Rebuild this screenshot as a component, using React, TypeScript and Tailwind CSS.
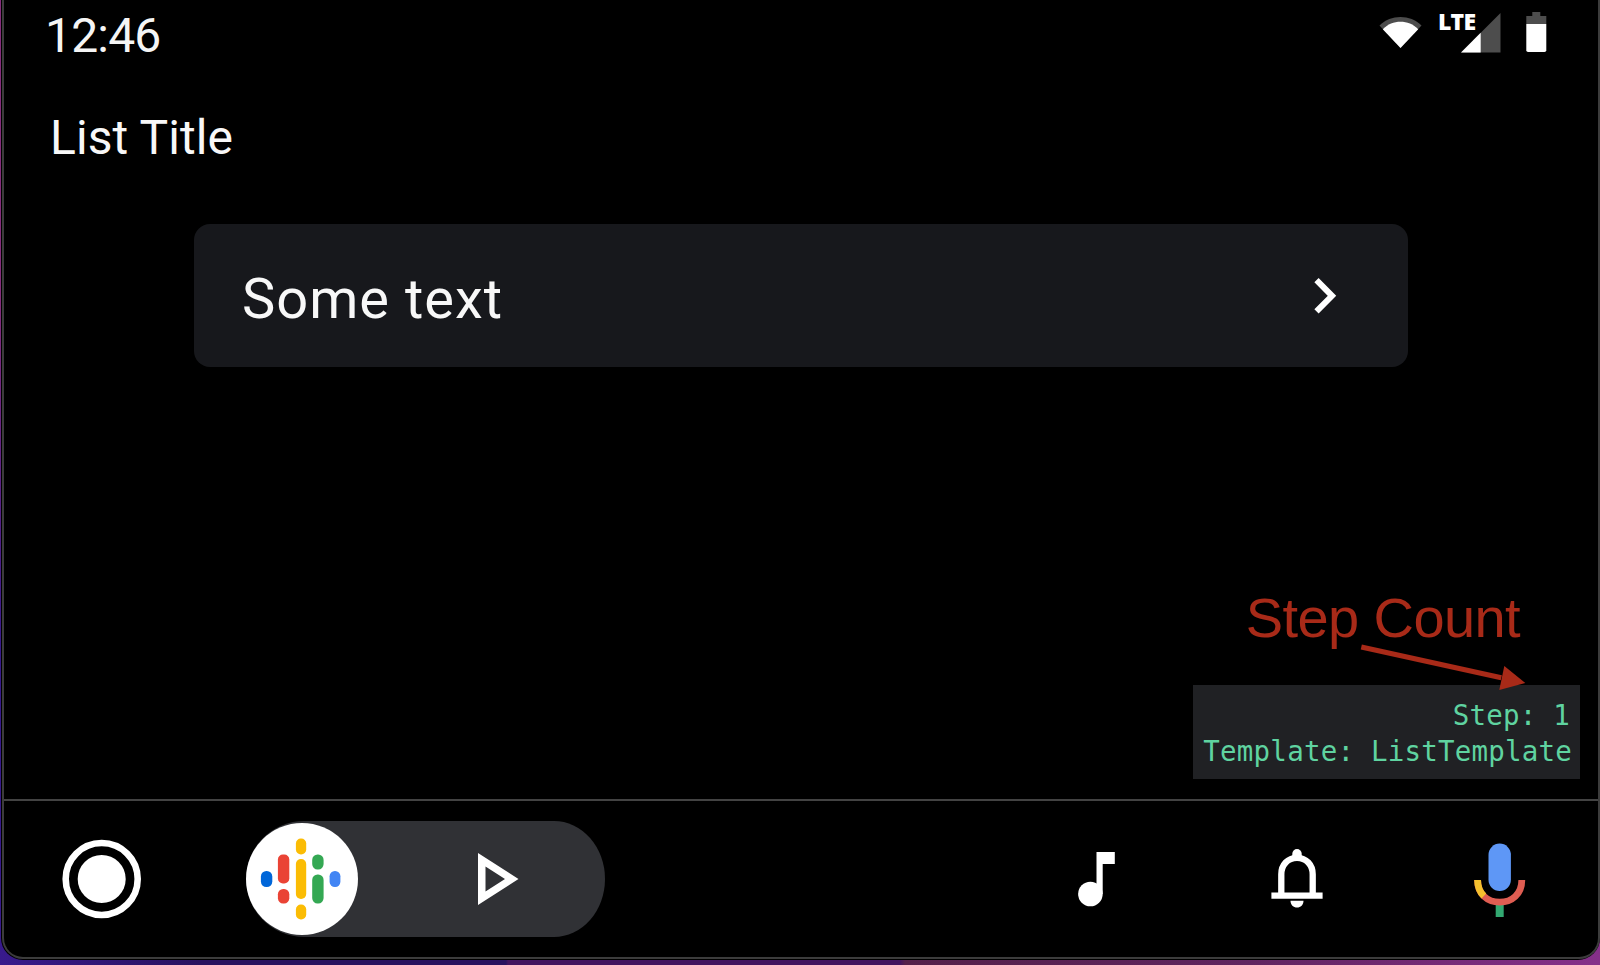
import React from 'react';

interface IconProps {
  className?: string;
}

const WifiIcon: React.FC<IconProps> = ({ className = '' }) => (
  <svg className={className} width="44" height="33" viewBox="0 0 44 33" fill="none">
    <path d="M0.5 9.5C12 -1.7 31 -1.7 42.5 9.5L21.5 32Z" fill="#4d4d4d" />
    <path d="M3.8 13.2C13.5 3.4 29.5 3.4 39.2 13.2L21.5 32Z" fill="#fff" />
  </svg>
);

const SignalIcon: React.FC<IconProps> = ({ className = '' }) => (
  <svg className={className} width="40" height="40" viewBox="0 0 40 40" fill="none">
    <path d="M0 39.5L39.5 0V39.5Z" fill="#4d4d4d" />
    <path d="M0 39.5L19.7 19.8V39.5Z" fill="#fff" />
  </svg>
);

const BatteryIcon: React.FC<IconProps> = ({ className = '' }) => (
  <svg className={className} width="21" height="40" viewBox="0 0 21 40" fill="none">
    <path d="M6.3 0H14.3V4H20.3V12H0.3V4H6.3Z" fill="#4d4d4d" />
    <path d="M0.3 12H20.3V38.2Q20.3 40 18.5 40H2.1Q0.3 40 0.3 38.2Z" fill="#fff" />
  </svg>
);

const ChevronIcon: React.FC = () => (
  <svg width="24" height="38" viewBox="0 0 24 38" fill="none">
    <path d="M2.5 3.2L18 18.8L2.5 34.4" stroke="#fff" strokeWidth="6" />
  </svg>
);

const HomeIcon: React.FC = () => (
  <svg width="80" height="80" viewBox="0 0 80 80" fill="none">
    <circle cx="39.7" cy="40" r="36" stroke="#fff" strokeWidth="6.6" />
    <circle cx="39.7" cy="40" r="24" fill="#fff" />
  </svg>
);

const PodcastBars: React.FC = () => (
  <svg width="112" height="112" viewBox="0.6 0 112 112">
    <rect x="15.5" y="48" width="11.4" height="16" rx="5.5" fill="#0066d9" />
    <rect x="32.5" y="31.5" width="11.4" height="29" rx="5" fill="#ea4335" />
    <rect x="32.5" y="66" width="11.4" height="14.5" rx="5.2" fill="#ea4335" />
    <rect x="50.5" y="15.5" width="10.3" height="16" rx="5" fill="#fbbc04" />
    <rect x="50.5" y="36" width="10.3" height="40" rx="5" fill="#fbbc04" />
    <rect x="50.5" y="81.5" width="10.3" height="15" rx="5" fill="#fbbc04" />
    <rect x="66.8" y="31.5" width="11.4" height="15" rx="5.4" fill="#34a853" />
    <rect x="66.8" y="51.5" width="11.4" height="29" rx="5.4" fill="#34a853" />
    <rect x="84.2" y="48" width="10.8" height="16" rx="5.2" fill="#4285f4" />
  </svg>
);

const PlayIcon: React.FC = () => (
  <svg width="42" height="54" viewBox="0.5 0 42 54">
    <path d="M0.5 1V53L41 27ZM8 14.5L27.5 27L8 39.5Z" fill="#fff" fillRule="evenodd" />
  </svg>
);

const NoteIcon: React.FC = () => (
  <svg width="37" height="56" viewBox="0 0 37 56" fill="#fff">
    <circle cx="12.4" cy="43" r="12.3" />
    <path d="M18.5 1H36.8V13H24.7V43H18.5Z" />
  </svg>
);

const BellIcon: React.FC = () => (
  <svg width="52" height="60" viewBox="0 1.2 52 60" fill="none">
    <path d="M10.3 46V26.5C10.3 17 16.8 10 26 10S41.7 17 41.7 26.5V46" stroke="#fff" strokeWidth="6.3" />
    <rect x="21.3" y="1.2" width="9.4" height="11" rx="4.7" fill="#fff" />
    <path d="M0.4 44.7H51.6V51H0.4Z" fill="#fff" />
    <path d="M19.5 53H32.5C32.5 57 29.6 59.8 26 59.8S19.5 57 19.5 53Z" fill="#fff" />
  </svg>
);

const MicIcon: React.FC = () => (
  <svg width="52" height="76" viewBox="0 0 52 76" fill="none">
    <rect x="14.5" y="2.6" width="22.4" height="47.4" rx="11.2" fill="#5e97f6" />
    <path d="M25.7 61V76" stroke="#32a871" strokeWidth="8" />
    <path d="M3.6 39C3.6 53 13.4 61.2 25.7 61.2S47.8 53 47.8 39" stroke="#df5d52" strokeWidth="6.8" />
    <path d="M3.6 39C3.6 45.8 6 51.2 9.9 55" stroke="#f4c02e" strokeWidth="6.8" />
  </svg>
);

const StatusBar: React.FC = () => (
  <header className="flex h-[76px] justify-between pl-[41px] pr-[51px]">
    <span className="mt-[8px] text-[48px] leading-[56px] tracking-[-0.8px] text-[#f5f5f5]">12:46</span>
    <div className="flex items-start">
      <WifiIcon className="mt-[16px]" />
      <span className="ml-[15px] mt-[7px] w-[23px] whitespace-nowrap font-['Open_Sans',sans-serif] text-[23px] font-extrabold leading-[28px] tracking-[-0.8px]">
        LTE
      </span>
      <SignalIcon className="mt-[12.5px]" />
      <BatteryIcon className="ml-[25px] mt-[12px]" />
    </div>
  </header>
);

const ListRow: React.FC<{ title: string }> = ({ title }) => (
  <div className="ml-[190px] mr-[190px] flex h-[143px] items-center justify-between rounded-[16px] bg-[#17181c] pl-[48px] pr-[70px]">
    <span className="mt-[6px] text-[56px] leading-[64px] tracking-[1px] text-[#f8f8f8]">{title}</span>
    <ChevronIcon />
  </div>
);

const DebugOverlay: React.FC = () => (
  <div className="absolute bottom-[20px] right-[18px] h-[94px] w-[387.5px] bg-[#202124] pr-[8px] pt-[12px] text-right font-['DejaVu_Sans_Mono',monospace] text-[27.5px] leading-[36px] tracking-[0.2px] text-[#5fd3a0]">
    <div className="whitespace-pre pr-[2px]">Step: 1</div>
    <div className="whitespace-pre">Template: ListTemplate</div>
  </div>
);

const Annotation: React.FC = () => (
  <div className="absolute right-[72px] top-[586px] text-[#a82a18]">
    <div className="whitespace-nowrap pr-[6px] font-['Liberation_Sans',sans-serif] text-[56px] leading-[64px] tracking-[-0.6px]">
      Step Count
    </div>
    <svg className="absolute right-0 top-[56px]" width="170" height="50" viewBox="0.7 0 170 50" fill="none">
      <path d="M6 5L146 35.8" stroke="currentColor" strokeWidth="5.2" />
      <path d="M149 24L170 41L144 48Z" fill="currentColor" />
    </svg>
  </div>
);

const NavBar: React.FC = () => (
  <footer className="flex h-[158px] items-center border-t-2 border-[#434343] pl-[58px] pr-[72px]">
    <HomeIcon />
    <div className="ml-[104px] flex h-[116px] w-[359px] items-center rounded-[58px_51px_51px_58px/58px] bg-[#303135]">
      <div className="h-[112px] w-[112px] rounded-full bg-white">
        <PodcastBars />
      </div>
      <div className="ml-[120px]">
        <PlayIcon />
      </div>
    </div>
    <div className="ml-auto flex items-center">
      <NoteIcon />
      <div className="ml-[156px]">
        <BellIcon />
      </div>
      <div className="ml-[151px]">
        <MicIcon />
      </div>
    </div>
  </footer>
);

export default function App() {
  return (
    <div className="h-[965px] w-[1600px] overflow-hidden bg-[linear-gradient(90deg,#381a8c_0px,#28125f_200px,#28125f_506px,#42145f_508px,#42145f_900px,#54204a_905px,#5f2560_1250px,#85308a_1600px)]">
      <div className="h-[965px] bg-[linear-gradient(180deg,#852d7c_0px,#852d7c_300px,#381a8c_650px)] bg-[length:2px_940px] bg-no-repeat pl-px">
        <div className="h-[960px] rounded-b-[22px] bg-black pb-px pl-px">
          <div className="relative flex h-full flex-col overflow-hidden rounded-b-[21px] border-x-2 border-b-2 border-[#3c3c3c] bg-black font-[Roboto,sans-serif] text-white">
            <StatusBar />
            <h1 className="ml-[46px] mt-[34px] text-[48px] leading-[56px] tracking-[0.1px] text-[#f8f8f8]">List Title</h1>
            <main className="relative mt-[58px] flex-1">
              <ListRow title="Some text" />
              <DebugOverlay />
            </main>
            <Annotation />
            <NavBar />
          </div>
        </div>
      </div>
    </div>
  );
}
